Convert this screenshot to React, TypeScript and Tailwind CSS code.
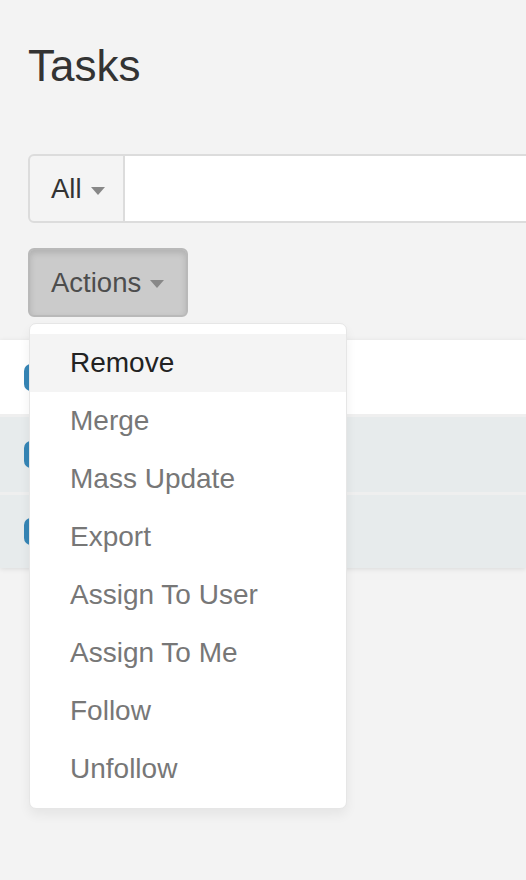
import { type FC } from 'react';

const actions = ['Remove', 'Merge', 'Mass Update', 'Export', 'Assign To User', 'Assign To Me', 'Follow', 'Unfollow'];

// Bootstrap-like caret
const Caret: FC<{ className?: string }> = ({ className = '' }) => (
  <span className={`inline-block w-0 h-0 border-x-[7px] border-x-transparent border-t-[8px] border-t-[#888] ${className}`} />
);

const Checkbox: FC = () => (
  <div className="ml-[24px] w-[27px] h-[27px] rounded-[7px] bg-[#3686b6] flex items-center justify-center">
    <svg width="16" height="16" viewBox="0 0 16 16" fill="none">
      <path d="M3 8.5l3.2 3L13 4.5" stroke="white" strokeWidth="2.4" strokeLinecap="round" strokeLinejoin="round" />
    </svg>
  </div>
);

const App: FC = () => {
  return (
    <div className="w-full min-h-[880px] bg-[#f3f3f3] overflow-hidden" style={{ fontFamily: '"Liberation Sans", Arial, sans-serif' }}>
      <div className="px-[28px] pt-[44px]">
        <h1 className="text-[44px] leading-[44px] text-[#333] font-normal">Tasks</h1>

        {/* search bar */}
        <div className="mt-[66px] mr-[-40px] flex h-[69px]">
          <div className="w-[97px] h-full flex items-center pl-[21px] bg-[#f4f4f4] border-2 border-[#dcdcdc] rounded-l-[6px] text-[27.5px] text-[#333]">
            <span>All</span>
            <Caret className="ml-[9px] mt-[5px]" />
          </div>
          <div className="flex-1 h-full bg-white border-y-2 border-[#dcdcdc]" />
        </div>

        {/* actions */}
        <div className="relative mt-[25px] w-fit z-10">
          <button className="w-[160px] h-[69px] flex items-center pl-[21px] bg-[#cbcbcb] border-2 border-[#b9b9b9] rounded-[6px] shadow-[inset_0_3px_6px_rgba(0,0,0,0.13)] text-[27.5px] text-[#4d4d4d]">
            <span>Actions</span>
            <Caret className="ml-[9px] mt-[3px]" />
          </button>
          <ul className="absolute top-[calc(100%+6px)] left-[1px] w-[318px] py-[10px] bg-white border border-[#e6e6e6] rounded-[7px] shadow-[0_6px_12px_rgba(0,0,0,0.06)]">
            {actions.map((a, i) => (
              <li
                key={a}
                className={`h-[58px] leading-[58px] pl-[40px] text-[28px] whitespace-nowrap ${i === 0 ? 'bg-[#f4f4f4] text-[#222]' : 'text-[#777]'}`}
              >
                {a}
              </li>
            ))}
          </ul>
        </div>
      </div>

      {/* list behind the menu */}
      <div className="mt-[23px] bg-white shadow-[0_1px_5px_rgba(0,0,0,0.1)]">
        <div className="h-[77px] flex items-center bg-white border-b-[3px] border-[#efefef]">
          <Checkbox />
        </div>
        <div className="h-[78px] flex items-center bg-[#e7ebec] border-b-[3px] border-[#efefef]">
          <Checkbox />
        </div>
        <div className="h-[73px] flex items-center bg-[#e7ebec]">
          <Checkbox />
        </div>
      </div>
    </div>
  );
};

export default App;
